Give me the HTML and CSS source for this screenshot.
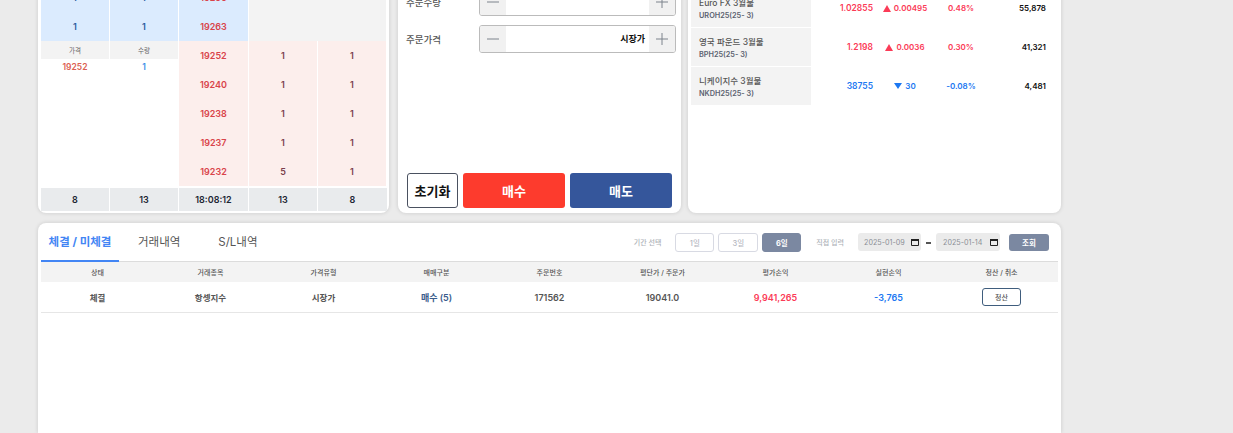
FILE: index.html
```html
<!DOCTYPE html>
<html lang="ko">
<head>
<meta charset="utf-8">
<title>주문</title>
<link rel="stylesheet" href="styles.css">
</head>
<body>
<div class="page">
  <div class="top">
    <section class="card book">
      <div class="cell bid qty"><b>1</b></div><div class="cell bid qty"><b>1</b></div><div class="cell bid price">19265</div>
      <div class="empty"></div>
      <div class="cell bid qty"><b>1</b></div><div class="cell bid qty"><b>1</b></div><div class="cell bid price">19263</div>
      <div class="trades">
        <div class="trades-head"><span>가격</span><span>수량</span></div>
        <div class="trades-row"><span class="trade-price">19252</span><span class="trade-qty">1</span></div>
      </div>
      <div class="cell ask price">19252</div><div class="cell ask qty">1</div><div class="cell ask qty end">1</div>
      <div class="cell ask price">19240</div><div class="cell ask qty">1</div><div class="cell ask qty end">1</div>
      <div class="cell ask price">19238</div><div class="cell ask qty">1</div><div class="cell ask qty end">1</div>
      <div class="cell ask price">19237</div><div class="cell ask qty">1</div><div class="cell ask qty end">1</div>
      <div class="cell ask price">19232</div><div class="cell ask qty">5</div><div class="cell ask qty end">1</div>
      <div class="cell total">8</div><div class="cell total">13</div><div class="cell total">18:08:12</div><div class="cell total">13</div><div class="cell total">8</div>
    </section>

    <section class="card order">
      <div class="field-row">
        <span class="field-label">주문수량</span>
        <div class="stepper">
          <span class="step"><svg width="12" height="12" viewBox="0 0 12 12"><path d="M0 6h12" stroke="#7d838c" stroke-width="1"/></svg></span>
          <span class="step-value"></span>
          <span class="step"><svg width="12" height="12" viewBox="0 0 12 12"><path d="M0 6h12M6 0v12" stroke="#7d838c" stroke-width="1"/></svg></span>
        </div>
      </div>
      <div class="field-row">
        <span class="field-label">주문가격</span>
        <div class="stepper">
          <span class="step"><svg width="12" height="12" viewBox="0 0 12 12"><path d="M0 6h12" stroke="#7d838c" stroke-width="1"/></svg></span>
          <span class="step-value">시장가</span>
          <span class="step"><svg width="12" height="12" viewBox="0 0 12 12"><path d="M0 6h12M6 0v12" stroke="#7d838c" stroke-width="1"/></svg></span>
        </div>
      </div>
      <div class="actions">
        <button class="btn-reset">초기화</button>
        <button class="btn-buy">매수</button>
        <button class="btn-sell">매도</button>
      </div>
    </section>

    <section class="card market">
      <div class="m-row">
        <div class="m-name"><strong>Euro FX 3월물</strong><small>UROH25(25- 3)</small></div>
        <span class="m-price up">1.02855</span>
        <span class="m-change up"><i class="tri-up"></i>0.00495</span>
        <span class="m-pct up">0.48%</span>
        <span class="m-vol">55,878</span>
      </div>
      <div class="m-row">
        <div class="m-name"><strong>영국 파운드 3월물</strong><small>BPH25(25- 3)</small></div>
        <span class="m-price up">1.2198</span>
        <span class="m-change up"><i class="tri-up"></i>0.0036</span>
        <span class="m-pct up">0.30%</span>
        <span class="m-vol">41,321</span>
      </div>
      <div class="m-row">
        <div class="m-name"><strong>니케이지수 3월물</strong><small>NKDH25(25- 3)</small></div>
        <span class="m-price down">38755</span>
        <span class="m-change down"><i class="tri-down"></i>30</span>
        <span class="m-pct down">-0.08%</span>
        <span class="m-vol">4,481</span>
      </div>
    </section>
  </div>

  <section class="card history">
    <div class="toolbar">
      <nav class="tabs">
        <a class="tab tab-active">체결 / 미체결</a>
        <a class="tab tab-trades">거래내역</a>
        <a class="tab tab-sl">S/L내역</a>
      </nav>
      <div class="filters">
        <span class="filter-label">기간 선택</span>
        <button class="range">1일</button>
        <button class="range">3일</button>
        <button class="range range-on">6일</button>
        <span class="filter-label label-direct">직접 입력</span>
        <div class="date"><span>2025-01-09</span><svg width="8" height="8" viewBox="0 0 8 8"><path d="M.5 1.5h7v6h-7z" fill="none" stroke="#222" stroke-width="1"/><path d="M0 1h8v2H0z" fill="#222"/></svg></div>
        <span class="dash"></span>
        <div class="date"><span>2025-01-14</span><svg width="8" height="8" viewBox="0 0 8 8"><path d="M.5 1.5h7v6h-7z" fill="none" stroke="#222" stroke-width="1"/><path d="M0 1h8v2H0z" fill="#222"/></svg></div>
        <button class="search">조회</button>
      </div>
    </div>
    <div class="t-head">
      <span>상태</span><span>거래종목</span><span>가격유형</span><span>매매구분</span><span>주문번호</span><span>평단가 / 주문가</span><span>평가손익</span><span>실현손익</span><span>청산 / 취소</span>
    </div>
    <div class="t-row">
      <span class="ko">체결</span><span class="ko">항셍지수</span><span class="ko">시장가</span><span class="side">매수 (5)</span><span>171562</span><span>19041.0</span><span class="up">9,941,265</span><span class="down">-3,765</span><span><button class="close-btn">청산</button></span>
    </div>
  </section>
</div>
</body>
</html>
```
FILE: styles.css
```css
* { box-sizing: border-box; }
html, body { margin: 0; height: 433px; overflow: hidden; }
body {
  background: #ebebeb;
  font-family: Inter, "Noto Sans CJK KR", "Noto Sans", sans-serif;
  color: #333;
}
button { font-family: inherit; cursor: pointer; padding: 0; }
.page { width: 1023px; margin: -30px 0 0 38px; padding-top: 0; }
.card {
  background: #fff;
  border-radius: 8px;
  box-shadow: 0 0 4px rgba(0, 0, 0, .14);
}
.top {
  display: grid;
  grid-template-columns: 351px 284px 372px;
  column-gap: 8px;
  height: 243px;
}
.top .order { margin-left: 1px; }
.top .market { margin-left: -1px; }

/* order book */
.book {
  display: grid;
  grid-template-columns: 68px 68px 69px 68px 69px;
  grid-template-rows: 29px 29px repeat(5, 29px) 25px;
  column-gap: 1px;
  padding: 13px 2px 0 3px;
  align-content: start;
}
.cell {
  display: flex;
  align-items: center;
  justify-content: center;
  font-size: 9px;
  font-weight: 600;
}
.bid { background: #dbebfe; }
.ask { background: #fceeec; }
.ask.end { margin-right: 1px; }
.bid.qty b { font-weight: 600; color: #2c5a9c; }
.ask.qty { color: #7a3f4c; }
.price { color: #d9434a; }
.empty { grid-column: 4 / 6; grid-row: 1 / 3; background: #f3f3f3; margin-right: 1px; }
.trades { grid-column: 1 / 3; grid-row: 3 / 8; }
.trades-head {
  display: grid;
  grid-template-columns: 68px 68px;
  column-gap: 1px;
  height: 18px;
}
.trades-head span {
  background: #f3f3f3;
  font-size: 6.5px;
  color: #666;
  display: flex;
  align-items: center;
  justify-content: center;
}
.trades-row {
  display: grid;
  grid-template-columns: 68px 68px;
  column-gap: 1px;
  height: 16px;
  font-size: 8.5px;
  font-weight: 600;
  text-align: center;
  line-height: 16px;
}
.trade-price { color: #dc5f52; }
.trade-qty { color: #3d8fe8; }
.total {
  background: #e9ebed;
  color: #1c2533;
  margin-top: 2px;
  height: 23px;
}

/* order form */
.order { display: flex; flex-direction: column; padding: 0 5px 5px 8px; }
.field-row {
  display: flex;
  align-items: center;
  justify-content: space-between;
  height: 28px;
  margin-bottom: 9px;
}
.order .field-row:first-child { margin-top: 18px; }
.field-label { font-size: 9.5px; color: #555; font-weight: 500; }
.stepper {
  display: flex;
  width: 197px;
  height: 28px;
  border: 1px solid #bbb;
  border-radius: 3px;
  overflow: hidden;
}
.step {
  width: 26px;
  background: #f1f1f1;
  display: flex;
  align-items: center;
  justify-content: center;
}
.step-value {
  flex: 1;
  text-align: right;
  font-size: 9px;
  font-weight: 700;
  color: #111;
  line-height: 26px;
  padding-right: 4px;
}
.actions { margin-top: auto; display: flex; gap: 5px; padding-left: 1px; padding-right: 4px; }
.actions button {
  height: 35px;
  border-radius: 3px;
  font-size: 13px;
  font-weight: 700;
  border: 0;
  color: #fff;
}
.actions .btn-reset {
  width: 51px;
  background: #fff;
  color: #111;
  border: 1px solid #4a5160;
}
.actions .btn-buy { width: 102px; background: #fd3b2d; }
.actions .btn-sell { width: 102px; background: #35569b; }

/* market list */
.market { padding: 19px 0 0 3px; }
.m-row {
  display: grid;
  grid-template-columns: 120px 62px 64px 48px 61px;
  height: 38px;
  margin-bottom: 1px;
  align-items: center;
  font-size: 8px;
  font-weight: 600;
}
.m-name {
  background: #f3f3f3;
  height: 100%;
  padding-left: 8px;
  display: flex;
  flex-direction: column;
  justify-content: center;
}
.m-name strong { font-size: 8.5px; font-weight: 500; color: #555; line-height: 14px; }
.m-name small { font-size: 7.3px; font-weight: 600; color: #5b6270; line-height: 11px; }
.m-price { text-align: right; font-size: 8.5px; }
.m-change { display: flex; align-items: center; justify-content: center; gap: 3px; }
.m-pct { text-align: center; }
.m-vol { text-align: right; color: #111; }
.up { color: #fb3b57; }
.down { color: #1c78f2; }
.tri-up, .tri-down { width: 0; height: 0; border-left: 4px solid transparent; border-right: 4px solid transparent; }
.tri-up { border-bottom: 7px solid #fb3b57; }
.tri-down { border-top: 6px solid #1c78f2; }

/* history */
.history {
  margin-top: 10px;
  height: 210px;
  padding: 0 3px;
  border-radius: 8px 8px 0 0;
}
.toolbar {
  display: flex;
  justify-content: space-between;
  height: 39px;
  border-bottom: 1px solid #dcdcdc;
}
.tabs { display: flex; }
.tab {
  font-size: 11.5px;
  color: #555;
  line-height: 38px;
  height: 39px;
}
.tab-active {
  width: 78px;
  text-align: center;
  color: #4285f4;
  font-weight: 700;
  border-bottom: 2px solid #4285f4;
}
.tab-trades { margin-left: 19px; }
.tab-sl { margin-left: 38px; }
.filters { display: flex; align-items: center; padding: 0 9px 0 0; height: 38px; }
.filter-label { font-size: 7px; color: #aeb2b8; font-weight: 500; margin-right: 14px; white-space: nowrap; }
.label-direct { margin-left: 15px; }
.range {
  width: 39px;
  height: 19px;
  margin-right: 4px;
  background: #fff;
  border: 1px solid #d8dae3;
  border-radius: 3px;
  font-size: 7.5px;
  font-weight: 500;
  color: #b5b8bf;
}
.range + .range { width: 40px; }
.range.range-on { width: 39px; margin-right: 0; background: #7b88a1; border-color: #7b88a1; color: #fff; font-weight: 700; }
.date {
  display: flex;
  align-items: center;
  justify-content: space-between;
  width: 63px;
  height: 18px;
  border-radius: 3px;
  background: #ebebeb;
  font-size: 7.2px;
  color: #8b8f96;
  padding: 0 2px 0 6px;
}
.date + .dash + .date { width: 64px; padding-left: 7px; }
.dash { width: 5px; height: 2px; background: #555; margin: 1px 5px 0 5px; }
.search {
  width: 40px;
  height: 17px;
  margin-left: 9px;
  border: 0;
  border-radius: 3px;
  background: #7b88a1;
  color: #fff;
  font-size: 7.5px;
  font-weight: 700;
}
.t-head, .t-row {
  display: grid;
  grid-template-columns: repeat(9, 113px);
  text-align: center;
  align-items: center;
}
.t-head {
  height: 20px;
  background: #f3f3f3;
  font-size: 7px;
  font-weight: 500;
  color: #555;
}
.t-row {
  height: 31px;
  font-size: 9px;
  font-weight: 600;
  color: #555;
  border-bottom: 1px solid #e6e6e6;
}
.t-row .ko { font-size: 8.5px; }
.t-row .side { color: #3a5c8c; }
.t-row .up { color: #fb3b57; }
.t-row .down { color: #1c78f2; }
.close-btn {
  width: 39px;
  height: 18px;
  background: #fff;
  border: 1px solid #3f5d7d;
  border-radius: 3px;
  font-size: 7px;
  font-weight: 500;
  color: #555;
  display: inline-block;
  vertical-align: middle;
}
```
